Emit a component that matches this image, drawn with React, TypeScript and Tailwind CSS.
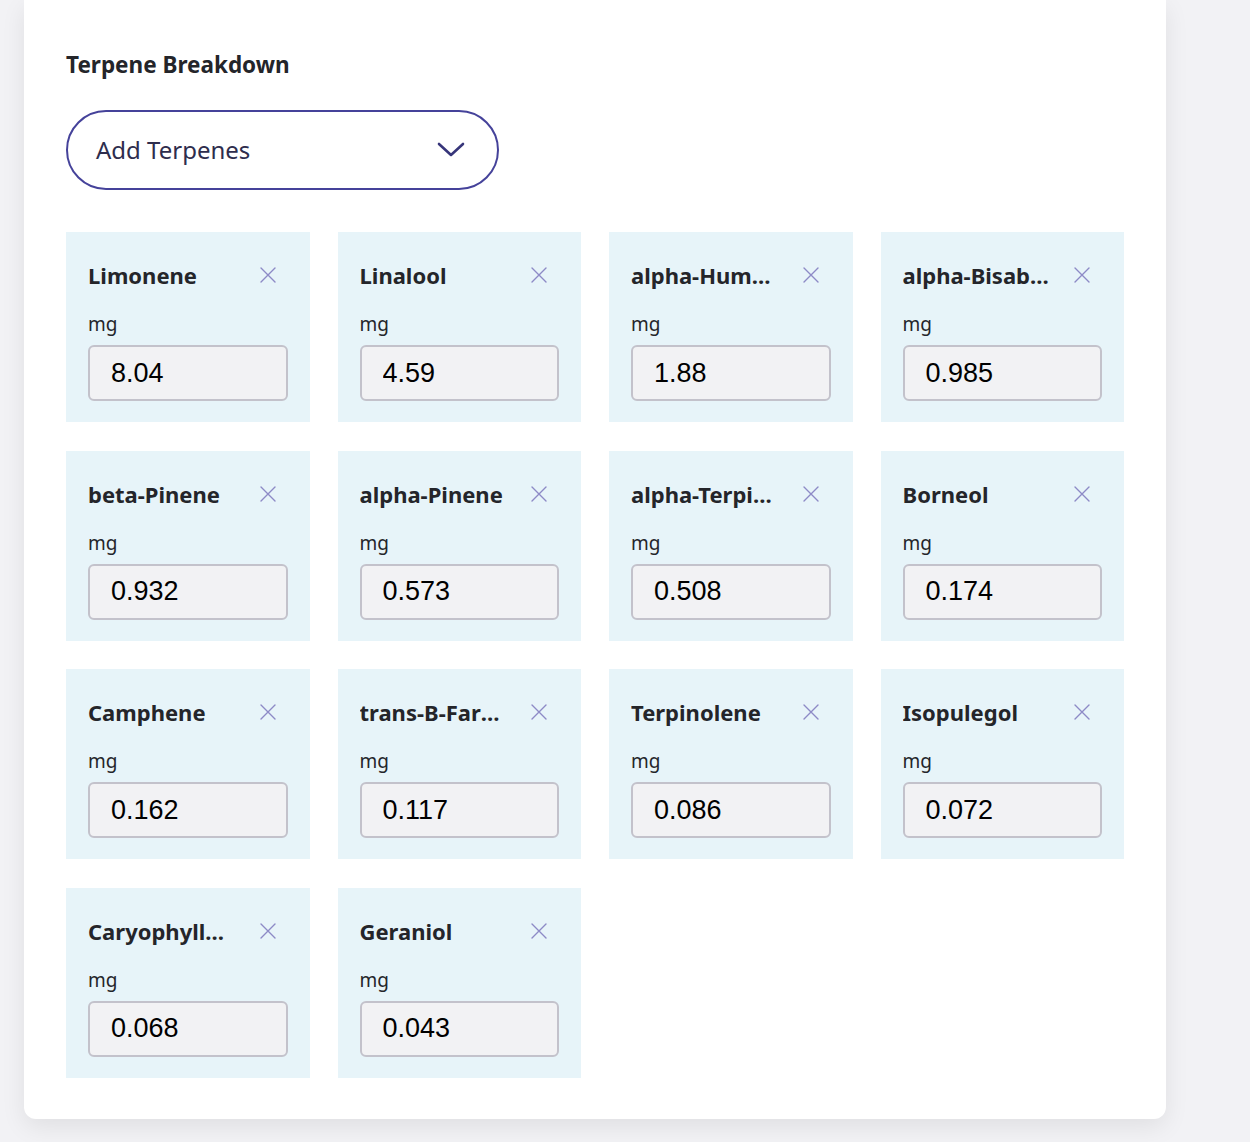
import React from "react";

const terpenes = [
  { name: "Limonene", value: "8.04" },
  { name: "Linalool", value: "4.59" },
  { name: "alpha-Humulene", value: "1.88" },
  { name: "alpha-Bisabolol", value: "0.985" },
  { name: "beta-Pinene", value: "0.932" },
  { name: "alpha-Pinene", value: "0.573" },
  { name: "alpha-Terpineol", value: "0.508" },
  { name: "Borneol", value: "0.174" },
  { name: "Camphene", value: "0.162" },
  { name: "trans-B-Farnesene", value: "0.117" },
  { name: "Terpinolene", value: "0.086" },
  { name: "Isopulegol", value: "0.072" },
  { name: "Caryophyllene", value: "0.068" },
  { name: "Geraniol", value: "0.043" },
];

function CloseIcon() {
  return (
    <svg width="16" height="16" viewBox="0 0 16 16" fill="none" className="shrink-0">
      <path d="M1 1L15 15M15 1L1 15" stroke="#8d8ac6" strokeWidth="1.4" strokeLinecap="round" />
    </svg>
  );
}

function TerpeneCard({ name, value }: { name: string; value: string }) {
  return (
    <div className="bg-[#e7f4f9] px-[22px] pt-7 pb-[21px] flex flex-col">
      <div className="flex items-center h-[30px]">
        <span className="flex-1 min-w-0 truncate text-[22px] font-bold text-[#24252a] leading-[30px]">{name}</span>
        <button className="ml-6 mr-3 flex items-center">
          <CloseIcon />
        </button>
      </div>
      <div className="mt-[22px] text-[19px] leading-6 text-[#24252a]">mg</div>
      <input
        defaultValue={value}
        className="mt-[9px] h-14 w-full rounded-md border-2 border-[#c3c2cb] bg-[#f2f2f4] px-[21px] text-[27px] text-black outline-none [font-family:'Liberation_Sans',Arial,sans-serif]"
      />
    </div>
  );
}

export default function App() {
  return (
    <div className="min-h-[1142px] bg-[#f2f2f5] pl-6 pr-[84px] pb-6 [font-family:'Noto_Sans',sans-serif]">
      <div className="rounded-b-xl bg-white px-[42px] pt-[50px] pb-[41px] shadow-[0_8px_24px_rgba(0,0,0,0.08)]">
        <h2 className="text-[22.5px] font-bold leading-[30px] text-[#24252a]">Terpene Breakdown</h2>

        <button className="mt-[30px] flex h-[80px] w-[433px] items-center justify-between rounded-full border-2 border-[#45429a] pl-7 pr-8">
          <span className="text-[24px] text-[#2e2d4d]">Add Terpenes</span>
          <svg width="28" height="16" viewBox="0 0 28 16" fill="none">
            <path d="M2 2L14 13L26 2" stroke="#37357a" strokeWidth="2.6" strokeLinecap="round" strokeLinejoin="round" />
          </svg>
        </button>

        <div className="mt-[42px] grid grid-cols-4 gap-x-7 gap-y-[28.5px]">
          {terpenes.map((t) => (
            <TerpeneCard key={t.name} name={t.name} value={t.value} />
          ))}
        </div>
      </div>
    </div>
  );
}
